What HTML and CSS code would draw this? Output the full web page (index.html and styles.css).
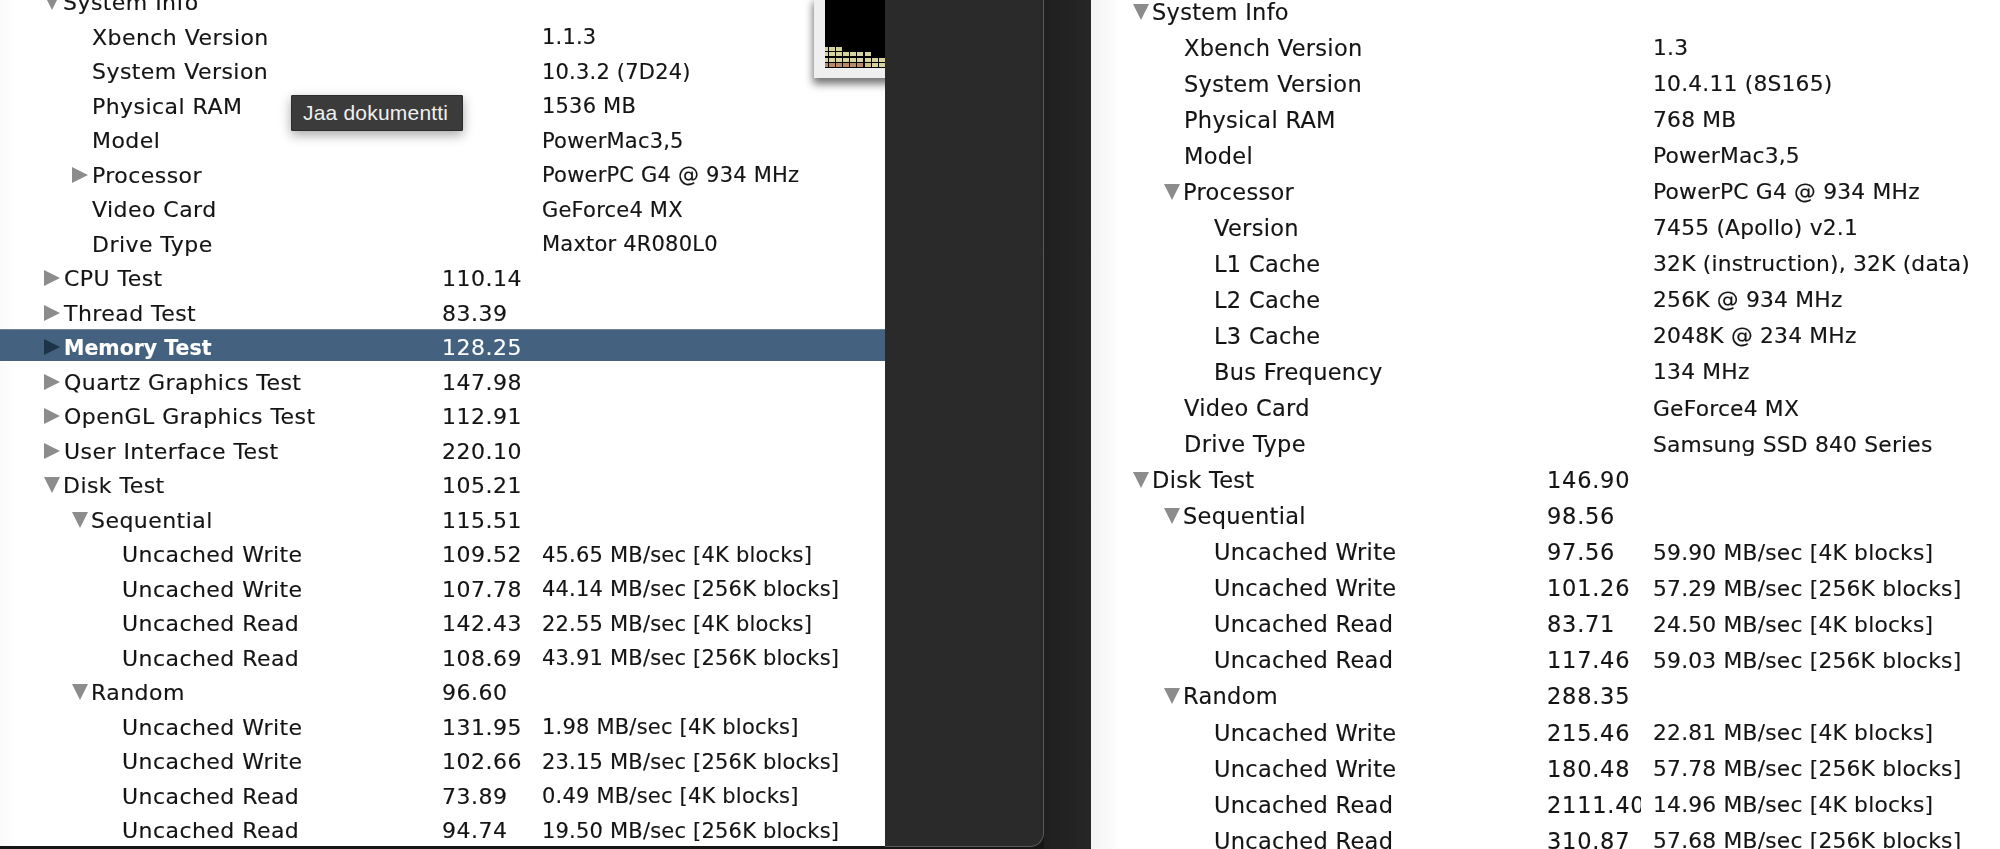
FILE: index.html
```html
<!DOCTYPE html>
<html lang="en">
<head>
<meta charset="utf-8">
<title>Xbench results</title>
<link rel="stylesheet" href="styles.css">
</head>
<body>
<div class="screen">
  <div class="window">
    <section class="doc doc-left">
      <div class="tree">
        <div class="row"><span class="name d0"><i class="tri down"></i>System Info</span><span class="score"></span><span class="info"></span></div>
        <div class="row"><span class="name d1">Xbench Version</span><span class="score"></span><span class="info">1.1.3</span></div>
        <div class="row"><span class="name d1">System Version</span><span class="score"></span><span class="info">10.3.2 (7D24)</span></div>
        <div class="row"><span class="name d1">Physical RAM</span><span class="score"></span><span class="info">1536 MB</span></div>
        <div class="row"><span class="name d1">Model</span><span class="score"></span><span class="info">PowerMac3,5</span></div>
        <div class="row"><span class="name d1"><i class="tri right"></i>Processor</span><span class="score"></span><span class="info">PowerPC G4 @ 934 MHz</span></div>
        <div class="row"><span class="name d1">Video Card</span><span class="score"></span><span class="info">GeForce4 MX</span></div>
        <div class="row"><span class="name d1">Drive Type</span><span class="score"></span><span class="info">Maxtor 4R080L0</span></div>
        <div class="row"><span class="name d0"><i class="tri right"></i>CPU Test</span><span class="score">110.14</span><span class="info"></span></div>
        <div class="row"><span class="name d0"><i class="tri right"></i>Thread Test</span><span class="score">83.39</span><span class="info"></span></div>
        <div class="row selected"><span class="name d0"><i class="tri right"></i>Memory Test</span><span class="score">128.25</span><span class="info"></span></div>
        <div class="row"><span class="name d0"><i class="tri right"></i>Quartz Graphics Test</span><span class="score">147.98</span><span class="info"></span></div>
        <div class="row"><span class="name d0"><i class="tri right"></i>OpenGL Graphics Test</span><span class="score">112.91</span><span class="info"></span></div>
        <div class="row"><span class="name d0"><i class="tri right"></i>User Interface Test</span><span class="score">220.10</span><span class="info"></span></div>
        <div class="row"><span class="name d0"><i class="tri down"></i>Disk Test</span><span class="score">105.21</span><span class="info"></span></div>
        <div class="row"><span class="name d1"><i class="tri down"></i>Sequential</span><span class="score">115.51</span><span class="info"></span></div>
        <div class="row"><span class="name d2">Uncached Write</span><span class="score">109.52</span><span class="info">45.65 MB/sec [4K blocks]</span></div>
        <div class="row"><span class="name d2">Uncached Write</span><span class="score">107.78</span><span class="info">44.14 MB/sec [256K blocks]</span></div>
        <div class="row"><span class="name d2">Uncached Read</span><span class="score">142.43</span><span class="info">22.55 MB/sec [4K blocks]</span></div>
        <div class="row"><span class="name d2">Uncached Read</span><span class="score">108.69</span><span class="info">43.91 MB/sec [256K blocks]</span></div>
        <div class="row"><span class="name d1"><i class="tri down"></i>Random</span><span class="score">96.60</span><span class="info"></span></div>
        <div class="row"><span class="name d2">Uncached Write</span><span class="score">131.95</span><span class="info">1.98 MB/sec [4K blocks]</span></div>
        <div class="row"><span class="name d2">Uncached Write</span><span class="score">102.66</span><span class="info">23.15 MB/sec [256K blocks]</span></div>
        <div class="row"><span class="name d2">Uncached Read</span><span class="score">73.89</span><span class="info">0.49 MB/sec [4K blocks]</span></div>
        <div class="row"><span class="name d2">Uncached Read</span><span class="score">94.74</span><span class="info">19.50 MB/sec [256K blocks]</span></div>
      </div>
      <div class="tooltip">Jaa dokumentti</div>
      <div class="thumb">
        <svg class="thumb-art" width="60" height="68" viewBox="0 0 60 68" aria-hidden="true">
          <rect width="60" height="68" fill="#000"/>
          <g fill="#d6d49c">
            <rect x="-3" y="47" width="6" height="4"/><rect x="4" y="47" width="6" height="4"/><rect x="11" y="47" width="6" height="4"/>
            <rect x="-3" y="52" width="6" height="4"/><rect x="4" y="52" width="6" height="4"/><rect x="11" y="52" width="6" height="4"/><rect x="18" y="52" width="6" height="4"/><rect x="25" y="52" width="6" height="4"/><rect x="32" y="52" width="6" height="4"/><rect x="40" y="52" width="6" height="4"/>
            <rect x="-3" y="58" width="6" height="4"/><rect x="4" y="58" width="6" height="4"/><rect x="11" y="58" width="6" height="4"/><rect x="18" y="58" width="6" height="4"/><rect x="25" y="58" width="6" height="4"/><rect x="32" y="58" width="6" height="4"/><rect x="40" y="58" width="6" height="4"/><rect x="47" y="58" width="6" height="4"/><rect x="54" y="58" width="6" height="4"/>
            <rect x="47" y="63" width="6" height="4"/><rect x="54" y="63" width="6" height="4"/>
          </g>
          <g fill="#b98a68">
            <rect x="-3" y="63" width="6" height="4"/><rect x="4" y="63" width="6" height="4"/><rect x="11" y="63" width="6" height="4"/><rect x="18" y="63" width="6" height="4"/><rect x="25" y="63" width="6" height="4"/><rect x="32" y="63" width="6" height="4"/><rect x="40" y="63" width="6" height="4" fill="#cdbf8c"/>
          </g>
        </svg>
      </div>
    </section>
    <div class="sheet"></div>
  </div>
  <div class="gutter"></div>
  <section class="doc doc-right">
    <div class="tree">
      <div class="row first"><span class="name d0"><i class="tri down"></i>System Info</span><span class="score"></span><span class="info"></span></div>
      <div class="row"><span class="name d1">Xbench Version</span><span class="score"></span><span class="info">1.3</span></div>
      <div class="row"><span class="name d1">System Version</span><span class="score"></span><span class="info">10.4.11 (8S165)</span></div>
      <div class="row"><span class="name d1">Physical RAM</span><span class="score"></span><span class="info">768 MB</span></div>
      <div class="row"><span class="name d1">Model</span><span class="score"></span><span class="info">PowerMac3,5</span></div>
      <div class="row"><span class="name d1"><i class="tri down"></i>Processor</span><span class="score"></span><span class="info">PowerPC G4 @ 934 MHz</span></div>
      <div class="row"><span class="name d2">Version</span><span class="score"></span><span class="info">7455 (Apollo) v2.1</span></div>
      <div class="row"><span class="name d2">L1 Cache</span><span class="score"></span><span class="info">32K (instruction), 32K (data)</span></div>
      <div class="row"><span class="name d2">L2 Cache</span><span class="score"></span><span class="info">256K @ 934 MHz</span></div>
      <div class="row"><span class="name d2">L3 Cache</span><span class="score"></span><span class="info">2048K @ 234 MHz</span></div>
      <div class="row"><span class="name d2">Bus Frequency</span><span class="score"></span><span class="info">134 MHz</span></div>
      <div class="row"><span class="name d1">Video Card</span><span class="score"></span><span class="info">GeForce4 MX</span></div>
      <div class="row"><span class="name d1">Drive Type</span><span class="score"></span><span class="info">Samsung SSD 840 Series</span></div>
      <div class="row"><span class="name d0"><i class="tri down"></i>Disk Test</span><span class="score">146.90</span><span class="info"></span></div>
      <div class="row"><span class="name d1"><i class="tri down"></i>Sequential</span><span class="score">98.56</span><span class="info"></span></div>
      <div class="row"><span class="name d2">Uncached Write</span><span class="score">97.56</span><span class="info">59.90 MB/sec [4K blocks]</span></div>
      <div class="row"><span class="name d2">Uncached Write</span><span class="score">101.26</span><span class="info">57.29 MB/sec [256K blocks]</span></div>
      <div class="row"><span class="name d2">Uncached Read</span><span class="score">83.71</span><span class="info">24.50 MB/sec [4K blocks]</span></div>
      <div class="row"><span class="name d2">Uncached Read</span><span class="score">117.46</span><span class="info">59.03 MB/sec [256K blocks]</span></div>
      <div class="row"><span class="name d1"><i class="tri down"></i>Random</span><span class="score">288.35</span><span class="info"></span></div>
      <div class="row"><span class="name d2">Uncached Write</span><span class="score">215.46</span><span class="info">22.81 MB/sec [4K blocks]</span></div>
      <div class="row"><span class="name d2">Uncached Write</span><span class="score">180.48</span><span class="info">57.78 MB/sec [256K blocks]</span></div>
      <div class="row"><span class="name d2">Uncached Read</span><span class="score clip">2111.40</span><span class="info">14.96 MB/sec [4K blocks]</span></div>
      <div class="row"><span class="name d2">Uncached Read</span><span class="score">310.87</span><span class="info">57.68 MB/sec [256K blocks]</span></div>
    </div>
  </section>
</div>
</body>
</html>
```

FILE: styles.css
```css
* { box-sizing: border-box; }
html, body { margin: 0; height: 100%; overflow: hidden; }
body { background: #232323; font-family: "DejaVu Sans", Verdana, sans-serif; color: #141414; }
.screen { display: flex; width: 2000px; height: 849px; overflow: hidden; }

.window { display: flex; align-items: flex-start; width: 1044px; height: 849px; background: #161616; flex: none; }
.gutter { width: 47px; flex: none; background: linear-gradient(90deg, #1f1f1f, #262626); }
.sheet { flex: 1; height: 847px; background: #2a2a2a; border-right: 1px solid #5a5a5a; border-bottom: 1px solid #5a5a5a; border-bottom-right-radius: 14px; }

.doc { position: relative; overflow: hidden; background: #fff; flex: none; }
.doc-left { width: 885px; height: 846px; background: linear-gradient(90deg, #fafafa, #fff 16px); }
.doc-right { width: 909px; height: 849px; background: linear-gradient(90deg, #f3f3f3, #fff 30px); }

.tree { display: flex; flex-direction: column; filter: blur(0.35px); -webkit-text-stroke: 0.15px currentColor; }
.doc-left .tree { margin-top: -16px; --col-name: 442px; --col-score: 100px; --d0: 64px; --d1: 92px; --d2: 122px; --row: 34.5px; --name-size: 22px; --name-ls: .45px; --score-ls: .5px; --info-size: 21px; --info-ls: .2px; }
.doc-right .tree { --col-name: 456px; --col-score: 106px; --d0: 62px; --d1: 93px; --d2: 123px; --row: 36.05px; --name-size: 22.5px; --name-ls: .3px; --score-ls: .75px; --info-size: 21.8px; --info-ls: .2px; }

.row { display: grid; grid-template-columns: var(--col-name) var(--col-score) 1fr; align-items: center; height: var(--row); flex: none; white-space: nowrap; line-height: 1.1; }
.doc-left .row { padding-top: 4px; }
.row.first { height: 30px; padding-bottom: 9px; }
.name { display: block; font-size: var(--name-size); letter-spacing: var(--name-ls); }
.d0 { padding-left: var(--d0); }
.d1 { padding-left: var(--d1); }
.d2 { padding-left: var(--d2); }
.score { font-size: var(--name-size); letter-spacing: var(--score-ls); }
.info { font-size: var(--info-size); letter-spacing: var(--info-ls); }
.clip { overflow: hidden; margin-right: 12px; }

.doc-left .selected { background: linear-gradient(#6d8295 1px, #44627f 1px, #44627f 32px, transparent 32px); color: #fff; }
.selected .name { font-weight: 700; font-size: 20.5px; letter-spacing: 0; }
.selected .tri.right { border-left-color: #1d3348; }

.tri { display: inline-block; width: 0; height: 0; margin-left: -20px; margin-right: 4px; }
.tri.right { border-top: 8px solid transparent; border-bottom: 8px solid transparent; border-left: 16px solid #8c8c8c; }
.tri.down { border-left: 8.5px solid transparent; border-right: 8.5px solid transparent; border-top: 16px solid #8c8c8c; margin-right: 3px; }

.tooltip { position: absolute; left: 291px; top: 95px; width: 172px; height: 36px; background: #3b3b3b; border: 1px solid #2c2c2c; border-radius: 1px; color: #f0f0f0; font-family: "Liberation Sans", Arial, sans-serif; font-size: 21px; letter-spacing: .2px; line-height: 33px; padding-left: 11px; box-shadow: 0 4px 12px rgba(0,0,0,.35); }

.thumb { position: absolute; left: 814px; top: -4px; width: 90px; height: 82px; background: #efefef; padding: 4px 0 0 11px; box-shadow: -1px 6px 8px rgba(0,0,0,.55); }
.thumb-art { display: block; filter: blur(0.5px); }
```
